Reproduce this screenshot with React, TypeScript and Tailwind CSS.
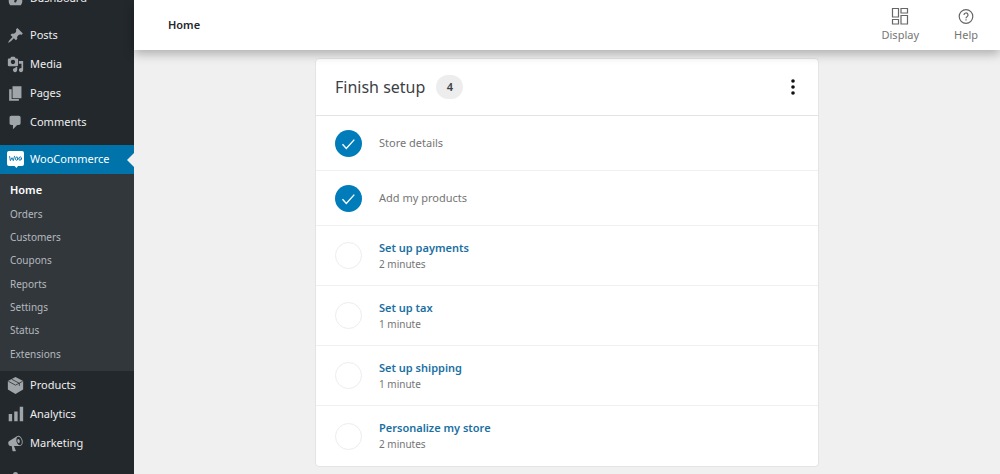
import React from "react";

type MenuEntry = { label: string; icon: React.ReactNode };

function Dashicon({ d, children }: { d?: string; children?: React.ReactNode }) {
  return (
    <svg viewBox="0 0 20 20" className="size-[17px] shrink-0 fill-[#a0a5aa]" fillRule="evenodd" aria-hidden="true">
      {d ? <path d={d} /> : children}
    </svg>
  );
}

const contentMenu: MenuEntry[] = [
  {
    label: "Posts",
    icon: (
      <Dashicon d="M10.44 3.02l1.82-1.82 6.36 6.35-1.83 1.82c-1.05-.68-2.48-.57-3.41.36l-.75.75c-.92.93-1.04 2.35-.35 3.41l-1.83 1.82-2.41-2.41-2.8 2.79c-.42.42-3.38 2.71-3.8 2.29s1.86-3.39 2.28-3.81l2.79-2.79L4.1 9.36l1.83-1.82c1.05.69 2.48.57 3.4-.36l.75-.75c.93-.92 1.05-2.35.36-3.41z" />
    ),
  },
  {
    label: "Media",
    icon: (
      <Dashicon d="M13 11V4c0-.55-.45-1-1-1h-1.67L9 1H5L3.67 3H2c-.55 0-1 .45-1 1v7c0 .55.45 1 1 1h10c.55 0 1-.45 1-1zM7 4.5c1.38 0 2.5 1.12 2.5 2.5S8.38 9.5 7 9.5 4.5 8.38 4.5 7 5.62 4.5 7 4.5zM14 6h5v10.5c0 1.38-1.12 2.5-2.5 2.5S14 17.88 14 16.5s1.12-2.5 2.5-2.5c.17 0 .34.02.5.05V9h-3V6zm-4 8.05V13h2v3.5c0 1.38-1.12 2.5-2.5 2.5S7 17.88 7 16.5 8.12 14 9.5 14c.17 0 .34.02.5.05z" />
    ),
  },
  { label: "Pages", icon: <Dashicon d="M6.5 15.5V1.5h10.500v14zm-1 1h8.500v2H2.500V5h3v11z" /> },
  {
    label: "Comments",
    icon: (
      <Dashicon d="M5 2h9c1.1 0 2 .9 2 2v7c0 1.1-.9 2-2 2h-2l-5 5v-5H5c-1.1 0-2-.9-2-2V4c0-1.1.9-2 2-2z" />
    ),
  },
];

const storeMenu: MenuEntry[] = [
  {
    label: "Products",
    icon: (
      <Dashicon>
        <path d="M10 0l9 4.6v10.2L10 20l-9-5.2V4.6z" />
        <path d="M1.5 5l8.5 4.6L18.5 5M5.5 2.6l9 4.8v3" fill="none" stroke="#23282d" strokeWidth="0.9" />
      </Dashicon>
    ),
  },
  { label: "Analytics", icon: <Dashicon d="M19 18V1h-4v17h4zm-6.500 0V6.500h-4V18h4zM6 18V9.500H2V18h4z" /> },
  {
    label: "Marketing",
    icon: (
      <Dashicon d="M18.15 5.94c.46 1.62.38 3.22-.02 4.48-.42 1.28-1.26 2.18-2.3 2.48-.16.06-.26.06-.4.06-.06.02-.12.02-.18.02-.06.02-.14.02-.22.02h-6.8l2.22 5.5c.02.14-.06.26-.14.34-.08.1-.24.16-.34.16H6.95c-.1 0-.26-.06-.34-.16-.08-.08-.16-.2-.14-.34l-1-5.5H4.25l-.02-.02c-.5.06-1.08-.18-1.54-.62s-.88-1.08-1.06-1.88c-.24-.8-.2-1.56-.02-2.2.18-.62.58-1.08 1.06-1.3l.02-.02 9-5.4c.1-.06.18-.1.24-.16.06-.04.14-.08.24-.12.16-.08.28-.12.5-.18 1.04-.3 2.24.1 3.22.98s1.84 2.24 2.26 3.86zm-2.58 5.98h-.02c.4-.1.74-.34 1.04-.7.58-.7.86-1.76.86-3.04 0-.64-.1-1.3-.28-1.98-.34-1.36-1.02-2.5-1.78-3.24s-1.68-1.1-2.46-.88c-.82.22-1.4.96-1.7 2-.32 1.04-.28 2.36.06 3.72.38 1.36 1 2.5 1.8 3.24.78.74 1.62 1.1 2.48.88zm-2.54-7.08c.22-.04.42-.02.62.04.38.16.76.48 1.02 1s.42 1.2.42 1.78c0 .3-.04.56-.12.8-.18.48-.44.84-.86.94-.34.1-.8-.06-1.14-.4s-.64-.86-.78-1.5c-.18-.62-.12-1.24.02-1.72s.48-.84.82-.94z" />
    ),
  },
];

const submenu = ["Home", "Orders", "Customers", "Coupons", "Reports", "Settings", "Status", "Extensions"];

const tasks = [
  { title: "Store details", done: true },
  { title: "Add my products", done: true },
  { title: "Set up payments", time: "2 minutes", done: false },
  { title: "Set up tax", time: "1 minute", done: false },
  { title: "Set up shipping", time: "1 minute", done: false },
  { title: "Personalize my store", time: "2 minutes", done: false },
];

function MenuLink({ label, icon }: MenuEntry) {
  return (
    <li>
      <a href="#" className="flex h-[29px] items-center gap-1.5 pl-[7px] text-[11px] text-[#eee]">
        {icon}
        {label}
      </a>
    </li>
  );
}

function Sidebar() {
  return (
    <nav aria-label="Main menu" className="w-[134px] shrink-0 bg-[#23282d]">
      <ul className="-mt-4">
        <MenuLink
          label="Dashboard"
          icon={
            <Dashicon d="M3.76 18h12.48c1.1-1.37 1.76-3.11 1.76-5 0-4.42-3.58-8-8-8s-8 3.58-8 8c0 1.89.66 3.63 1.76 5zM9 12l5-5-3 6.5c0 1-1 1.5-1.7 1.3S8 13 9 12z" />
          }
        />
      </ul>
      <ul className="mt-2">
        {contentMenu.map((item) => (
          <MenuLink key={item.label} {...item} />
        ))}
      </ul>
      <div className="mt-2 bg-[#32373c]">
        <a
          href="#"
          className="relative flex h-[29px] items-center gap-1.5 bg-[#0073aa] pl-[7px] text-[11px] text-white"
        >
          <svg viewBox="0 0 17 17" className="size-[17px] shrink-0" aria-hidden="true">
            <path d="M2 0h13a2 2 0 0 1 2 2v11a2 2 0 0 1-2 2h-4l-1.5 2L7.5 15H2a2 2 0 0 1-2-2V2a2 2 0 0 1 2-2z" fill="#fff" />
            <g fill="none" stroke="#0073aa" strokeWidth="0.9" strokeLinecap="round" strokeLinejoin="round">
              <path d="M2.6 5.5l.8 4.2 1.6-3 1.3 3L7.5 5.3" />
              <ellipse cx="9.7" cy="7.6" rx="1.2" ry="1.7" transform="rotate(12 9.7 7.6)" />
              <ellipse cx="13.2" cy="7.6" rx="1.2" ry="1.7" transform="rotate(12 13.2 7.6)" />
            </g>
          </svg>
          WooCommerce
          <span className="absolute top-1/2 right-0 -translate-y-1/2 border-y-[7px] border-r-[7px] border-y-transparent border-r-[#f0f0f0]" />
        </a>
        <ul className="grid h-[197px] auto-rows-fr py-[5px] pl-2.5">
          {submenu.map((label, i) => (
            <li key={label} className="flex items-center">
              <a
                href="#"
                aria-current={i === 0 ? "page" : undefined}
                className={i === 0 ? "text-[11px] font-semibold text-white" : "text-[10px] text-[#b4b9be]"}
              >
                {label}
              </a>
            </li>
          ))}
        </ul>
      </div>
      <ul>
        {storeMenu.map((item) => (
          <MenuLink key={item.label} {...item} />
        ))}
      </ul>
      <div className="mt-2 flex h-[29px] items-center pl-[7px]">
        <Dashicon d="M10 0a3 3 0 0 1 3 3v4h5v4H2V7h5V3a3 3 0 0 1 3-3zM3 12h14l-1 8H4z" />
      </div>
    </nav>
  );
}

function TopBar() {
  const action = "flex flex-col items-center gap-[2px] text-[11px] leading-4 text-[#757575]";
  return (
    <header className="relative z-10 flex h-[50px] shrink-0 items-center justify-between bg-white pr-[22px] pl-[34px] shadow-[0_4px_10px_rgba(0,0,0,0.28)]">
      <h1 className="text-[11px] font-semibold text-[#23282d]">Home</h1>
      <div className="flex gap-[35px]">
        <button type="button" className={action}>
          <svg viewBox="0 0 18 18" className="size-[18px]" fill="none" stroke="#666" strokeWidth="1.2" aria-hidden="true">
            <path d="M1.5 1.5h6v8.5h-6zM10 1.5h6.500v4.500H10zM1.500 12.500h6v4.500h-6zM10 8.500h6.500V17H10z" />
          </svg>
          Display
        </button>
        <button type="button" className={action}>
          <svg viewBox="0 0 18 18" className="size-[18px]" fill="none" stroke="#666" strokeWidth="1.2" aria-hidden="true">
            <circle cx="9" cy="9.5" r="6.8" />
            <path d="M7 8a2 2 0 1 1 3 1.700c-.7.4-1 .7-1 1.500" />
            <path d="M9 12.200v1.300" />
          </svg>
          Help
        </button>
      </div>
    </header>
  );
}

function SetupCard() {
  return (
    <section className="mx-auto w-full max-w-[504px] rounded-sm border border-[#e2e4e7] bg-white">
      <header className="flex h-[57px] items-center border-b border-[#e2e4e7] pr-[17px] pl-[19px]">
        <h2 className="text-[16px] text-[#3c4146]">Finish setup</h2>
        <span className="ml-[11px] flex h-6 w-[27px] items-center justify-center rounded-full bg-[#ededed] text-[11px] font-semibold text-[#3c4146]">
          4
        </span>
        <button type="button" aria-label="Task list options" className="ml-auto">
          <svg viewBox="0 0 16 18" className="h-[18px] w-4" fill="#111" aria-hidden="true">
            <circle cx="8" cy="3" r="1.8" />
            <circle cx="8" cy="9" r="1.8" />
            <circle cx="8" cy="15" r="1.8" />
          </svg>
        </button>
      </header>
      <ul className="divide-y divide-[#f0f0f0]">
        {tasks.map((task) => (
          <li
            key={task.title}
            className={`flex items-center gap-[17px] pl-[19px] ${task.done ? "h-[55px]" : "h-[60px]"}`}
          >
            {task.done ? (
              <span className="flex size-[27px] items-center justify-center rounded-full bg-[#007cba]">
                <svg viewBox="0 0 27 27" className="size-[27px]" fill="none" stroke="#fff" strokeWidth="1.4" aria-hidden="true">
                  <path d="M7.5 14.2l3.8 4.2 8-8.8" />
                </svg>
              </span>
            ) : (
              <span className="size-[27px] rounded-full border border-[#ededed]" />
            )}
            {task.done ? (
              <span className="text-[11px] text-[#757575]">{task.title}</span>
            ) : (
              <div>
                <a href="#" className="block text-[11px] leading-[17px] font-semibold text-[#1a6fa3]">
                  {task.title}
                </a>
                <div className="text-[10px] leading-[17px] text-[#757575]">{task.time}</div>
              </div>
            )}
          </li>
        ))}
      </ul>
    </section>
  );
}

export default function App() {
  return (
    <div className="flex h-screen overflow-hidden bg-[#f0f0f0] font-['Noto_Sans','Open_Sans',sans-serif]">
      <Sidebar />
      <div className="flex min-w-0 flex-1 flex-col">
        <TopBar />
        <main className="px-6 pt-2">
          <SetupCard />
        </main>
      </div>
    </div>
  );
}
